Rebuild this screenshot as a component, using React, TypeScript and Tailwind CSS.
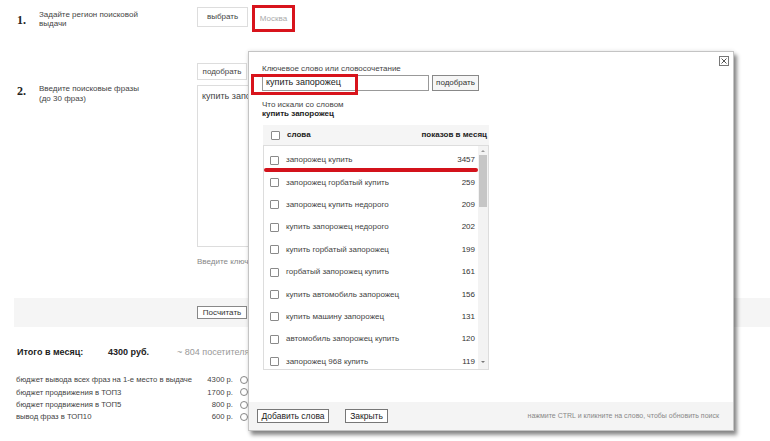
import React from "react";

const words: [string, string][] = [
  ["запорожец купить", "3457"],
  ["запорожец горбатый купить", "259"],
  ["запорожец купить недорого", "209"],
  ["купить запорожец недорого", "202"],
  ["купить горбатый запорожец", "199"],
  ["горбатый запорожец купить", "161"],
  ["купить автомобиль запорожец", "156"],
  ["купить машину запорожец", "131"],
  ["автомобиль запорожец купить", "120"],
  ["запорожец 968 купить", "119"],
];

const budget: [string, string][] = [
  ["бюджет вывода всех фраз на 1-е место в выдаче", "4300 р."],
  ["бюджет продвижения в ТОП3", "1700 р."],
  ["бюджет продвижения в ТОП5", "800 р."],
  ["вывод фраз в ТОП10", "600 р."],
];

function Box() {
  return <div className="w-[9px] h-[9px] shrink-0 border border-[#8a8a8a] rounded-[1px] bg-white" />;
}

export default function App() {
  return (
    <div className="relative w-[770px] h-[441px] overflow-hidden bg-white text-[#333] font-['Liberation_Sans',Arial,sans-serif]">
      {/* Step 1 */}
      <div className="flex pt-[7px] h-[63px]">
        <div className="w-[39px] pl-[17px] pt-[8px] font-['Liberation_Serif',serif] font-bold text-[12px] leading-[11px] text-[#222]">
          1.
        </div>
        <div className="w-[158px] pt-[3px]">
          <div className="w-[105px] text-[8px] leading-[9px] text-[#444]">Задайте регион поисковой выдачи</div>
        </div>
        <div className="flex items-start">
          <div className="w-[51px] h-[20px] border border-[#ddd] flex items-center justify-center text-[8px] text-[#444]">
            выбрать
          </div>
          <div className="ml-[4px] -mt-[2px] w-[43px] h-[27px] border-[3px] border-[#d8141c] flex items-center justify-center text-[8px] text-[#aaa]">
            Москва
          </div>
        </div>
      </div>

      {/* Step 2 */}
      <div className="flex h-[235px]">
        <div className="w-[39px] pl-[17px] pt-[23px] font-['Liberation_Serif',serif] font-bold text-[12px] leading-[11px] text-[#222]">
          2.
        </div>
        <div className="w-[158px] pt-[21px]">
          <div className="text-[8px] leading-[10px] text-[#444]">
            Введите поисковые фразы
            <br />
            (до 30 фраз)
          </div>
        </div>
        <div className="flex flex-col">
          <div className="w-[50px] h-[17px] border border-[#ddd] flex items-center justify-center text-[8px] text-[#444]">
            подобрать
          </div>
          <div className="mt-[5px] w-[300px] h-[162px] border border-[#ddd] pl-[4px] pt-[5px] text-[9px] leading-[10px] text-[#444]">
            купить запорожец
          </div>
          <div className="mt-[10px] text-[8px] leading-[10px] text-[#888]">Введите ключевые слова</div>
        </div>
      </div>

      {/* Gray band */}
      <div className="ml-[14px] h-[29px] bg-[#f5f5f5] flex items-center pl-[183px]">
        <div className="w-[50px] h-[13px] border border-[#888] bg-white flex items-center justify-center text-[8px] text-[#333]">
          Посчитать
        </div>
      </div>

      {/* Totals */}
      <div className="mt-[20px] h-[12px] flex items-center pl-[17px] text-[9px]">
        <div className="w-[91px] font-bold text-[#222]">Итого в месяц:</div>
        <div className="w-[69px] font-bold text-[#222]">4300 руб.</div>
        <div className="text-[#999]">~ 804 посетителя</div>
      </div>

      <div className="mt-[15px] pl-[16px] flex flex-col">
        {budget.map(([label, price]) => (
          <div key={label} className="h-[12.3px] flex items-center text-[7.7px] text-[#444]">
            <div className="w-[217px] flex">
              <span>{label}</span>
              <span className="ml-auto">{price}</span>
            </div>
            <div className="ml-[7px] w-[8px] h-[8px] rounded-full border border-[#888] bg-white" />
          </div>
        ))}
      </div>

      {/* Modal */}
      <div className="absolute left-[248px] top-[51px] w-[486px] h-[380px] border border-[#c4c4c4] bg-white flex flex-col shadow-[3px_4px_4px_rgba(0,0,0,0.45),0_0_4px_rgba(0,0,0,0.12)]">
        <div className="absolute right-[4px] top-[4px] w-[10px] h-[10px] border border-[#777] bg-white flex items-center justify-center">
          <svg width="8" height="8" viewBox="0 0 8 8">
            <path d="M1.5 1.5 L6.5 6.5 M6.5 1.5 L1.5 6.5" stroke="#555" strokeWidth="1" />
          </svg>
        </div>

        <div className="pl-[13px] pt-[12px] text-[8px] leading-[10px] text-[#444]">Ключевое слово или словосочетание</div>
        <div className="relative flex items-center gap-[3px] pl-[13px] mt-[1px]">
          <div className="w-[167px] h-[16px] border border-[#999] flex items-center pl-[3px] text-[9px] text-[#222]">
            купить запорожец
          </div>
          <div className="w-[47px] h-[16px] border border-[#888] bg-[#f6f6f6] flex items-center justify-center text-[8px] text-[#333]">
            подобрать
          </div>
          <div className="absolute left-[2px] -top-[1px] w-[107px] h-[21px] border-[3px] border-[#d8141c]" />
        </div>

        <div className="pl-[13px] mt-[9px] text-[8px] leading-[9px] text-[#444]">Что искали со словом</div>
        <div className="pl-[13px] text-[8px] leading-[10px] font-bold text-[#222]">купить запорожец</div>

        <div className="ml-[14px] mt-[6px] w-[226px]">
          <div className="h-[20px] bg-[#f5f5f5] flex items-center pl-[8px] pr-[2px] text-[8px] font-bold text-[#222]">
            <Box />
            <span className="ml-[7px]">слова</span>
            <span className="ml-auto">показов в месяц</span>
          </div>
          <div className="relative h-[225px] border border-[#ddd] flex">
            <div className="flex-1 pt-[3px]">
              {words.map(([w, n]) => (
                <div key={w} className="h-[22.4px] flex items-center pl-[6px] pr-[3px] text-[8px] text-[#444]">
                  <Box />
                  <span className="ml-[7px]">{w}</span>
                  <span className="ml-auto text-[#333]">{n}</span>
                </div>
              ))}
            </div>
            <div className="w-[10px] bg-[#f3f3f3] flex flex-col items-center">
              <svg width="6" height="8" viewBox="0 0 6 8" className="mt-[1px]">
                <path d="M1 5 L3 3 L5 5 Z" fill="#999" />
              </svg>
              <div className="w-[8px] h-[52px] bg-[#c6c6c6]" />
              <div className="flex-1" />
              <svg width="6" height="8" viewBox="0 0 6 8" className="mb-[3px]">
                <path d="M1 3 L3 5 L5 3 Z" fill="#777" />
              </svg>
            </div>
            <div className="absolute left-0 top-[22px] w-[214px] h-[3.5px] rounded-full bg-[#d3121b]" />
          </div>
        </div>

        <div className="mt-auto h-[28px] bg-[#f4f4f4] flex items-center pl-[8px] pr-[14px]">
          <div className="w-[72px] h-[14px] border border-[#777] bg-white flex items-center justify-center text-[8.5px] text-[#222]">
            Добавить слова
          </div>
          <div className="ml-[16px] w-[43px] h-[14px] border border-[#777] bg-white flex items-center justify-center text-[8.5px] text-[#222]">
            Закрыть
          </div>
          <div className="ml-auto text-[7px] text-[#888]">нажмите CTRL и кликните на слово, чтобы обновить поиск</div>
        </div>
      </div>
    </div>
  );
}
